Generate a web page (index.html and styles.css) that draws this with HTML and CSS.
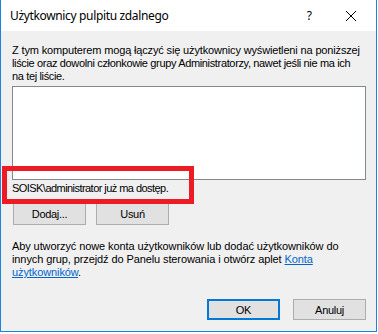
FILE: index.html
```html
<!DOCTYPE html>
<html lang="pl">
<head>
<meta charset="utf-8">
<title>Użytkownicy pulpitu zdalnego</title>
<link rel="stylesheet" href="styles.css">
</head>
<body>
<div class="window">
  <div class="titlebar">
    <span class="title">Użytkownicy pulpitu zdalnego</span>
    <span class="help">?</span>
    <svg class="close" width="12" height="12" viewBox="0 0 12 12"><path d="M1 1L11 11M11 1L1 11" stroke="#000" stroke-width="1" fill="none"/></svg>
  </div>
  <div class="content">
    <p class="intro"><span class="l1">Z tym komputerem mogą łączyć się użytkownicy wyświetleni na poniższej</span><br>liście oraz dowolni członkowie grupy Administratorzy, nawet jeśli nie ma ich<br>na tej liście.</p>
    <div class="listbox"></div>
    <p class="status">SOISK\administrator już ma dostęp.</p>
    <div class="row">
      <button class="btn">Dodaj...</button>
      <button class="btn">Usuń</button>
    </div>
    <p class="info">Aby utworzyć nowe konta użytkowników lub dodać użytkowników do<br>innych grup, przejdź do Panelu sterowania i otwórz aplet <a href="#">Konta<br>użytkowników</a>.</p>
    <div class="footer">
      <button class="btn btn-default">OK</button>
      <button class="btn">Anuluj</button>
    </div>
  </div>
  <div class="highlight"></div>
</div>
</body>
</html>
```
FILE: styles.css
```css
html, body {
  margin: 0;
  padding: 0;
  background: #ffffff;
}
body {
  width: 378px;
  height: 334px;
  overflow: hidden;
  font-family: "Liberation Sans", Arial, sans-serif;
  font-size: 11px;
  color: #000;
}
.window {
  position: relative;
  width: 377px;
  height: 332px;
  box-sizing: border-box;
  border: 1px solid #1a85dd;
  border-top: none;
  background: #f0f0f0;
  display: flex;
  flex-direction: column;
}
.titlebar {
  height: 31px;
  background: #ffffff;
  display: flex;
  align-items: center;
  padding-left: 9px;
  flex-shrink: 0;
}
.title {
  font-family: "Noto Sans", "Open Sans", sans-serif;
  font-size: 12px;
  letter-spacing: -0.35px;
  flex: 1;
  padding-bottom: 1px;
}
.help {
  font-family: "Noto Sans", sans-serif;
  font-size: 12px;
  margin-right: 33px;
  padding-bottom: 1px;
}
.close {
  margin-right: 19px;
}
.content {
  padding: 13px 10px 0 11px;
  display: flex;
  flex-direction: column;
}
p {
  margin: 0;
  line-height: 13px;
  white-space: nowrap;
  letter-spacing: -0.35px;
}
.l1 {
  letter-spacing: -0.15px;
}
.info {
  margin-top: 15px;
  letter-spacing: -0.1px;
}
.listbox {
  margin-top: 3px;
  height: 94px;
  box-sizing: border-box;
  background: #fff;
  border: 1px solid #828790;
}
.status {
  margin-top: 2px;
  letter-spacing: -0.55px;
}
.row {
  display: flex;
  gap: 10px;
  margin-top: 8px;
  padding-left: 1px;
}
.btn {
  font-family: "Liberation Sans", Arial, sans-serif;
  font-size: 11px;
  letter-spacing: -0.3px;
  color: #000;
  width: 73px;
  height: 22px;
  padding: 0;
  box-sizing: border-box;
  background: #e1e1e1;
  border: 1px solid #adadad;
  border-radius: 0;
}
.info a {
  color: #0066cc;
  text-decoration: underline;
}
.footer {
  display: flex;
  justify-content: flex-end;
  gap: 13px;
  margin-top: 20px;
}
.footer .btn {
  height: 21px;
}
.btn-default {
  border: 2px solid #0078d7;
}
.highlight {
  position: absolute;
  left: 1px;
  top: 166px;
  width: 192px;
  height: 38px;
  box-sizing: border-box;
  border: 5px solid #ed1c24;
}
```
